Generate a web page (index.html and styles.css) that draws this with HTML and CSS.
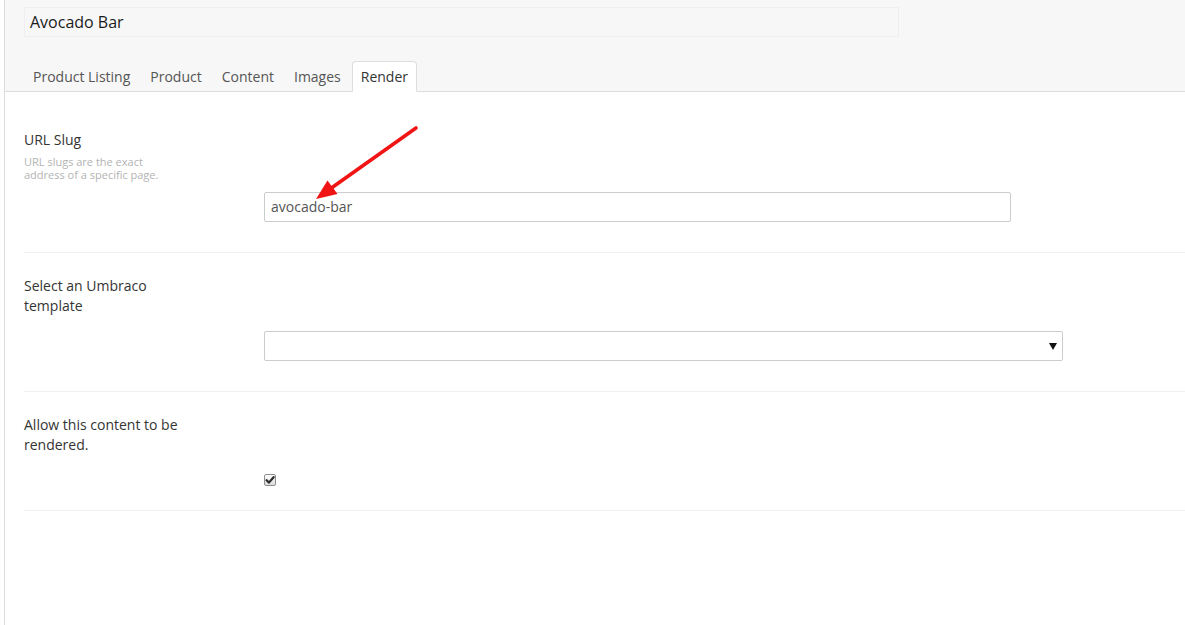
FILE: index.html
```html
<!DOCTYPE html>
<html lang="en">
<head>
<meta charset="utf-8">
<title>Avocado Bar</title>
<link rel="stylesheet" href="styles.css">
</head>
<body>
<div class="app">
  <div class="editor">
    <header class="editor-header">
      <div class="name-box">Avocado Bar</div>
      <ul class="tabs">
        <li class="tab">Product Listing</li>
        <li class="tab">Product</li>
        <li class="tab">Content</li>
        <li class="tab">Images</li>
        <li class="tab active">Render</li>
      </ul>
    </header>
    <main class="tab-content">
      <section class="prop-row">
        <div class="prop-label">
          <div class="label-text">URL Slug</div>
          <div class="label-desc">URL slugs are the exact address of a specific page.</div>
        </div>
        <div class="controls controls-after-desc">
          <div class="text-input">avocado-bar</div>
        </div>
      </section>
      <section class="prop-row">
        <div class="prop-label">
          <div class="label-text">Select an Umbraco template</div>
        </div>
        <div class="controls">
          <div class="select-input">
            <svg class="select-arrow" width="8" height="7" viewBox="0 0 8 7"><path d="M0 0H8L4 7Z" fill="#111"/></svg>
          </div>
        </div>
      </section>
      <section class="prop-row">
        <div class="prop-label">
          <div class="label-text">Allow this content to be rendered.</div>
        </div>
        <div class="controls controls-check">
          <span class="checkbox">
            <svg width="10" height="10" viewBox="0 0 10 10"><path d="M1.6 5.2L3.9 7.6L8.6 2.2" fill="none" stroke="#2a2a2a" stroke-width="2.2" stroke-linecap="round" stroke-linejoin="round"/></svg>
          </span>
        </div>
      </section>
    </main>
  </div>
  <svg class="annotation" width="1185" height="625" viewBox="0 0 1185 625">
    <line x1="416" y1="128" x2="330" y2="189" stroke="#f01414" stroke-width="3.6" stroke-linecap="round"/>
    <polygon points="316,199 327.5,180.5 337.5,194" fill="#f01414"/>
  </svg>
</div>
</body>
</html>
```
FILE: styles.css
```css
html, body {
  margin: 0;
  padding: 0;
  background: #fff;
}
body {
  font-family: "Open Sans", "Liberation Sans", sans-serif;
  font-size: 14px;
  line-height: 20px;
  color: #343434;
  width: 1185px;
  height: 625px;
  overflow: hidden;
}
.app {
  position: relative;
  height: 625px;
}
.editor {
  margin-left: 4px;
  border-left: 1px solid #dcdcdc;
  height: 625px;
}
.editor-header {
  background: #f7f7f7;
  border-bottom: 1px solid #dddddd;
  padding: 7px 0 0 19px;
}
.name-box {
  box-sizing: border-box;
  width: 875px;
  height: 30px;
  border: 1px solid #efefef;
  padding: 0 5px;
  font-size: 16px;
  line-height: 28px;
  color: #1b1b1b;
  margin-bottom: 24px;
}
.tabs {
  list-style: none;
  margin: 0 0 -1px 0;
  padding: 0;
  display: flex;
}
.tab {
  padding: 5px 8px 4px;
  margin-right: 2px;
  border: 1px solid transparent;
  border-radius: 4px 4px 0 0;
  color: #555;
  line-height: 20px;
}
.tab.active {
  background: #fff;
  border-color: #dddddd;
  border-bottom-color: transparent;
  color: #343434;
}
.tab-content {
  padding-top: 15px;
}
.prop-row {
  margin-left: 19px;
  padding: 23px 0 20px;
  border-bottom: 1px solid #f0f0f0;
}
.prop-label {
  width: 160px;
}
.label-text {
  color: #343434;
}
.label-desc {
  margin-top: 5px;
  font-size: 11px;
  line-height: 13px;
  color: #b3b3b3;
}
.controls {
  margin-left: 240px;
  margin-top: 15px;
}
.controls-after-desc {
  margin-top: 11px;
}
.text-input {
  box-sizing: border-box;
  width: 747px;
  height: 30px;
  border: 1px solid #cccccc;
  border-radius: 2px;
  padding: 0 6px;
  line-height: 28px;
  color: #555;
  margin-bottom: 10px;
}
.select-input {
  box-sizing: border-box;
  width: 799px;
  height: 30px;
  border: 1px solid #cccccc;
  border-radius: 2px;
  margin-bottom: 10px;
  display: flex;
  align-items: center;
  justify-content: flex-end;
  padding-right: 5px;
}
.select-arrow {
  display: block;
}
.controls-check {
  height: 20px;
  display: flex;
  align-items: center;
}
.checkbox {
  box-sizing: border-box;
  width: 12px;
  height: 12px;
  border: 1px solid #8e8e8e;
  border-radius: 2px;
  background: linear-gradient(#fdfdfd, #dcdcdc);
  display: flex;
  align-items: center;
  justify-content: center;
}
.checkbox svg {
  display: block;
}
.annotation {
  position: absolute;
  left: 0;
  top: 0;
  pointer-events: none;
}
```
